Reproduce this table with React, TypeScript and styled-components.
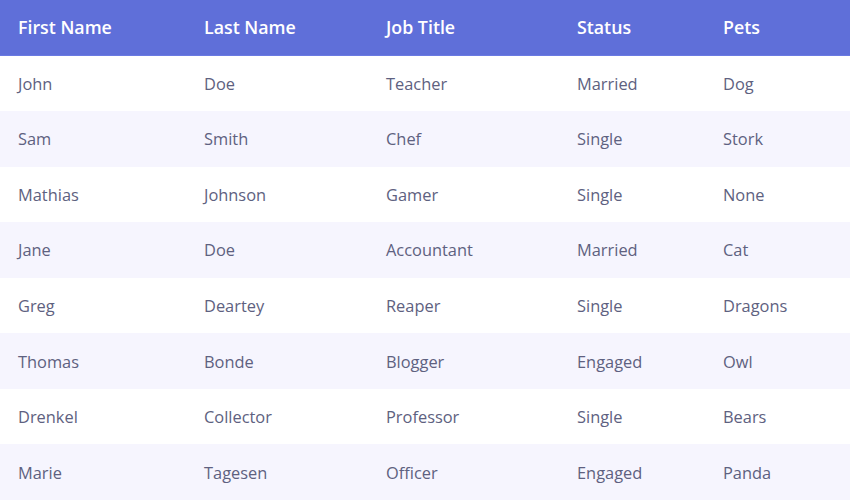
import styled, { createGlobalStyle } from "styled-components";

const GlobalStyle = createGlobalStyle`
  html, body {
    margin: 0;
    padding: 0;
    background: #fff;
  }
  body {
    font-family: "Open Sans", "Liberation Sans", sans-serif;
  }
`;

const columns = ["First Name", "Last Name", "Job Title", "Status", "Pets"];

const people = [
  ["John", "Doe", "Teacher", "Married", "Dog"],
  ["Sam", "Smith", "Chef", "Single", "Stork"],
  ["Mathias", "Johnson", "Gamer", "Single", "None"],
  ["Jane", "Doe", "Accountant", "Married", "Cat"],
  ["Greg", "Deartey", "Reaper", "Single", "Dragons"],
  ["Thomas", "Bonde", "Blogger", "Engaged", "Owl"],
  ["Drenkel", "Collector", "Professor", "Single", "Bears"],
  ["Marie", "Tagesen", "Officer", "Engaged", "Panda"],
];

const App = () => (
  <>
    <GlobalStyle />
    <Table>
      <HeaderRow>
        {columns.map((c) => (
          <HeadCell key={c}>{c}</HeadCell>
        ))}
      </HeaderRow>
      {people.map((row, i) => (
        <Row key={i} $striped={i % 2 === 1}>
          {row.map((cell, j) => (
            <Cell key={j}>{cell}</Cell>
          ))}
        </Row>
      ))}
    </Table>
  </>
);

export default App;

const Table = styled.div`
  display: grid;
  grid-template-rows: repeat(9, 1fr);
  width: 850px;
  height: 500px;
`;

const HeaderRow = styled.div`
  display: grid;
  grid-template-columns: 186px 182px 191px 146px 1fr;
  align-items: center;
  background: #5f6fd9;
  border-bottom: 1px solid #6a7ae2;
`;

const HeadCell = styled.div`
  padding-left: 18px;
  color: #fff;
  font-size: 17.8px;
  font-weight: 600;
`;

const Row = styled.div<{ $striped: boolean }>`
  display: grid;
  grid-template-columns: 186px 182px 191px 146px 1fr;
  align-items: center;
  background: ${(p) => (p.$striped ? "#f6f5fe" : "#ffffff")};
`;

const Cell = styled.div`
  padding-left: 18px;
  color: #5e6180;
  font-size: 16.4px;
`;
